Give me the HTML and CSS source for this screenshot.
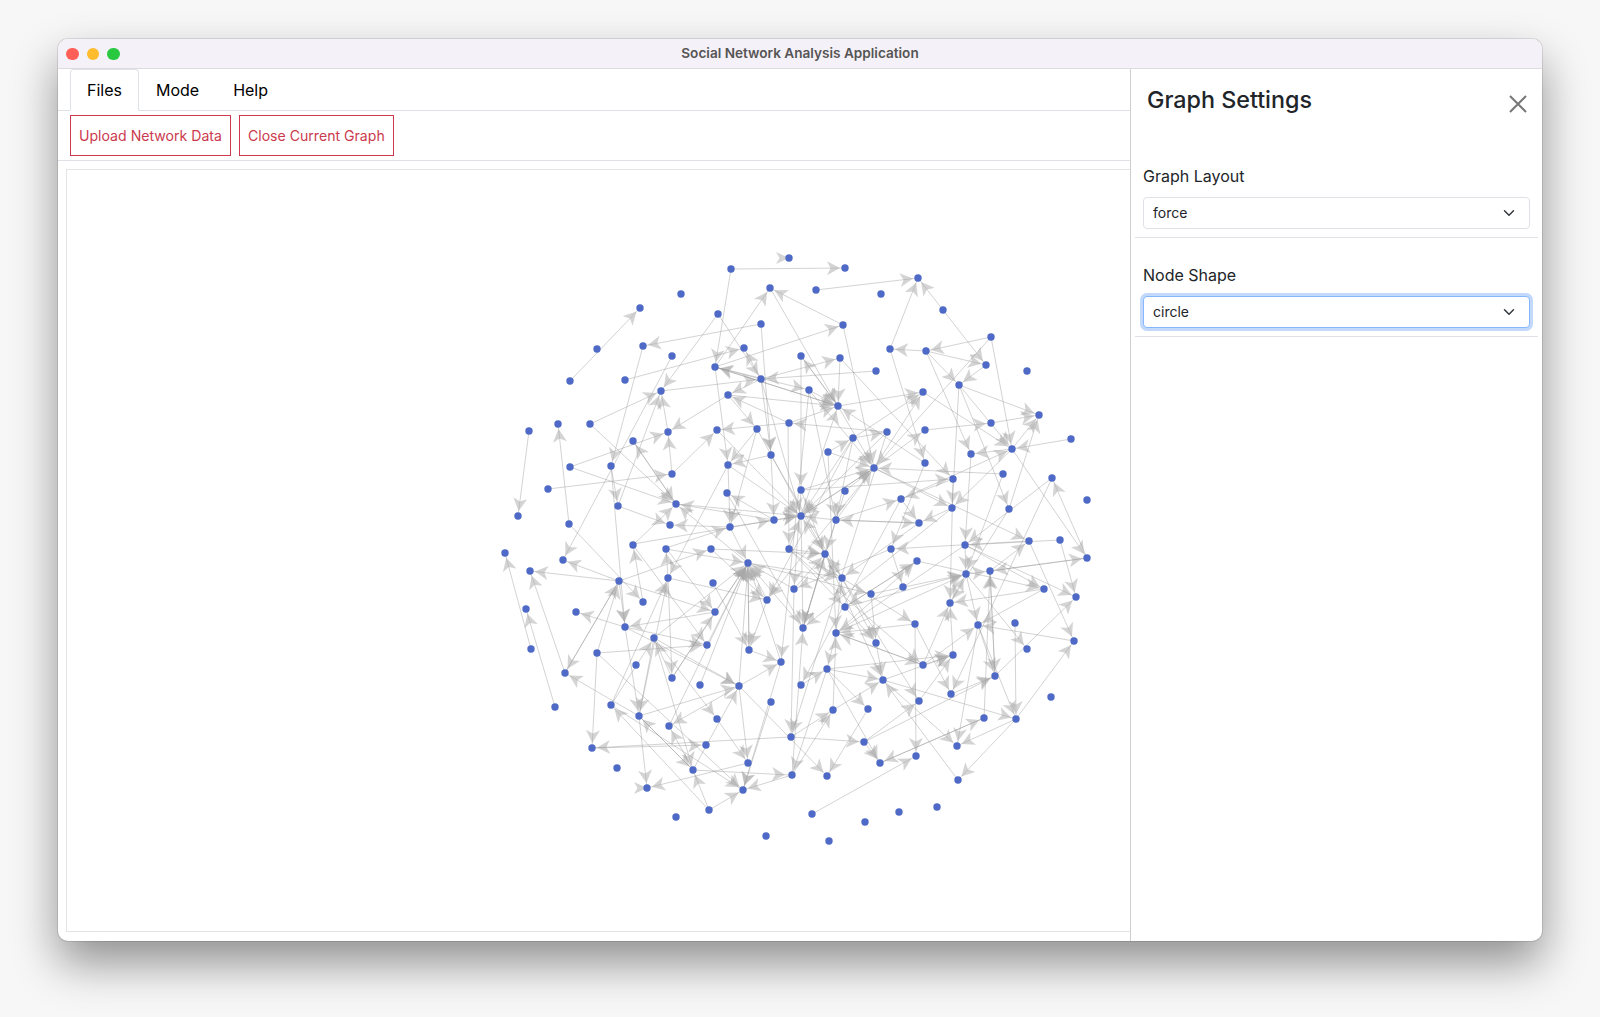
FILE: index.html
```html
<!DOCTYPE html>
<html lang="en">
<head>
<meta charset="utf-8">
<title>Social Network Analysis Application</title>
<link rel="stylesheet" href="styles.css">
</head>
<body>
<div class="window">
  <header class="titlebar">
    <div class="lights"><span class="light red"></span><span class="light yellow"></span><span class="light green"></span></div>
    <div class="title">Social Network Analysis Application</div>
  </header>
  <div class="main">
    <section class="workspace">
      <nav class="tabs">
        <a class="tab active">Files</a>
        <a class="tab">Mode</a>
        <a class="tab">Help</a>
      </nav>
      <div class="toolbar">
        <button class="btn">Upload Network Data</button>
        <button class="btn">Close Current Graph</button>
      </div>
      <div class="canvas">
<svg class="graph" width="1064" height="762" viewBox="67 170 1064 762">
<defs><marker id="a" markerUnits="userSpaceOnUse" markerWidth="13" markerHeight="14" viewBox="0 -7 13 14" refX="18" refY="0" orient="auto"><path class="head" d="M0,-7L13,0L0,7L3.5,0Z"/></marker></defs>
<g class="edges" marker-end="url(#a)">
<line x1="570" y1="381" x2="640" y2="308"/><line x1="731" y1="269" x2="845" y2="268"/><line x1="731" y1="269" x2="715" y2="367"/><line x1="761" y1="324" x2="643" y2="346"/><line x1="718" y1="314" x2="661" y2="391"/><line x1="715" y1="367" x2="770" y2="288"/><line x1="625" y1="380" x2="744" y2="348"/><line x1="643" y1="346" x2="611" y2="466"/><line x1="672" y1="356" x2="563" y2="560"/><line x1="843" y1="325" x2="770" y2="288"/><line x1="770" y1="288" x2="838" y2="406"/><line x1="761" y1="324" x2="771" y2="455"/><line x1="718" y1="314" x2="761" y2="379"/><line x1="715" y1="367" x2="843" y2="325"/><line x1="761" y1="379" x2="744" y2="348"/><line x1="761" y1="379" x2="715" y2="367"/><line x1="838" y1="406" x2="715" y2="367"/><line x1="661" y1="391" x2="761" y2="379"/><line x1="761" y1="379" x2="728" y2="395"/><line x1="789" y1="423" x2="728" y2="395"/><line x1="590" y1="424" x2="661" y2="391"/><line x1="590" y1="424" x2="676" y2="504"/><line x1="728" y1="395" x2="668" y2="432"/><line x1="570" y1="467" x2="668" y2="432"/><line x1="570" y1="467" x2="676" y2="504"/><line x1="672" y1="474" x2="668" y2="432"/><line x1="668" y1="432" x2="661" y2="391"/><line x1="618" y1="506" x2="661" y2="391"/><line x1="676" y1="504" x2="633" y2="441"/><line x1="633" y1="441" x2="676" y2="504"/><line x1="548" y1="489" x2="672" y2="474"/><line x1="672" y1="474" x2="717" y2="430"/><line x1="569" y1="524" x2="558" y2="424"/><line x1="529" y1="431" x2="518" y2="516"/><line x1="618" y1="506" x2="670" y2="525"/><line x1="611" y1="466" x2="618" y2="506"/><line x1="611" y1="466" x2="625" y2="627"/><line x1="569" y1="524" x2="643" y2="602"/><line x1="643" y1="602" x2="633" y2="545"/><line x1="633" y1="544" x2="774" y2="520"/><line x1="666" y1="548" x2="730" y2="527"/><line x1="728" y1="465" x2="668" y2="578"/><line x1="788" y1="423" x2="717" y2="430"/><line x1="757" y1="429" x2="728" y2="465"/><line x1="771" y1="455" x2="728" y2="465"/><line x1="717" y1="430" x2="801" y2="516"/><line x1="774" y1="520" x2="727" y2="493"/><line x1="728" y1="465" x2="730" y2="527"/><line x1="757" y1="429" x2="730" y2="527"/><line x1="771" y1="455" x2="774" y2="520"/><line x1="728" y1="395" x2="757" y2="429"/><line x1="715" y1="367" x2="728" y2="465"/><line x1="761" y1="379" x2="771" y2="455"/><line x1="761" y1="379" x2="801" y2="516"/><line x1="715" y1="367" x2="809" y2="390"/><line x1="715" y1="367" x2="838" y2="406"/><line x1="876" y1="371" x2="761" y2="379"/><line x1="761" y1="379" x2="840" y2="358"/><line x1="801" y1="356" x2="838" y2="406"/><line x1="838" y1="406" x2="801" y2="356"/><line x1="840" y1="358" x2="838" y2="406"/><line x1="840" y1="358" x2="953" y2="479"/><line x1="843" y1="325" x2="874" y2="468"/><line x1="816" y1="290" x2="918" y2="278"/><line x1="890" y1="349" x2="918" y2="278"/><line x1="943" y1="310" x2="918" y2="278"/><line x1="943" y1="310" x2="986" y2="365"/><line x1="926" y1="351" x2="986" y2="365"/><line x1="926" y1="351" x2="890" y2="349"/><line x1="991" y1="337" x2="926" y2="351"/><line x1="991" y1="337" x2="1012" y2="449"/><line x1="991" y1="337" x2="874" y2="468"/><line x1="890" y1="349" x2="925" y2="463"/><line x1="986" y1="365" x2="959" y2="385"/><line x1="926" y1="351" x2="971" y2="454"/><line x1="926" y1="351" x2="959" y2="385"/><line x1="959" y1="385" x2="1039" y2="415"/><line x1="838" y1="406" x2="923" y2="392"/><line x1="923" y1="392" x2="1012" y2="449"/><line x1="959" y1="385" x2="1012" y2="449"/><line x1="959" y1="385" x2="1009" y2="509"/><line x1="959" y1="385" x2="952" y2="508"/><line x1="1012" y1="449" x2="1039" y2="415"/><line x1="1009" y1="509" x2="1039" y2="415"/><line x1="991" y1="423" x2="1039" y2="415"/><line x1="925" y1="430" x2="991" y2="423"/><line x1="1071" y1="439" x2="1012" y2="449"/><line x1="1012" y1="449" x2="971" y2="454"/><line x1="901" y1="499" x2="1012" y2="449"/><line x1="1012" y1="449" x2="1087" y2="558"/><line x1="1029" y1="541" x2="1074" y2="641"/><line x1="1087" y1="558" x2="1052" y2="478"/><line x1="1060" y1="540" x2="1076" y2="597"/><line x1="1052" y1="478" x2="965" y2="545"/><line x1="1012" y1="449" x2="952" y2="508"/><line x1="971" y1="454" x2="965" y2="545"/><line x1="1003" y1="474" x2="874" y2="468"/><line x1="874" y1="468" x2="1029" y2="541"/><line x1="874" y1="468" x2="952" y2="508"/><line x1="953" y1="479" x2="901" y2="499"/><line x1="919" y1="523" x2="836" y2="520"/><line x1="836" y1="520" x2="919" y2="523"/><line x1="952" y1="508" x2="919" y2="523"/><line x1="901" y1="499" x2="919" y2="523"/><line x1="853" y1="438" x2="887" y2="432"/><line x1="887" y1="432" x2="789" y2="423"/><line x1="853" y1="438" x2="923" y2="392"/><line x1="828" y1="452" x2="853" y2="438"/><line x1="874" y1="468" x2="925" y2="430"/><line x1="874" y1="468" x2="923" y2="392"/><line x1="801" y1="490" x2="874" y2="468"/><line x1="801" y1="516" x2="874" y2="468"/><line x1="836" y1="520" x2="874" y2="468"/><line x1="845" y1="491" x2="874" y2="468"/><line x1="838" y1="406" x2="874" y2="468"/><line x1="809" y1="390" x2="874" y2="468"/><line x1="828" y1="452" x2="874" y2="468"/><line x1="789" y1="423" x2="838" y2="406"/><line x1="728" y1="395" x2="838" y2="406"/><line x1="809" y1="390" x2="838" y2="406"/><line x1="853" y1="438" x2="836" y2="520"/><line x1="809" y1="390" x2="836" y2="520"/><line x1="801" y1="356" x2="801" y2="490"/><line x1="887" y1="432" x2="801" y2="516"/><line x1="801" y1="490" x2="953" y2="479"/><line x1="836" y1="520" x2="901" y2="499"/><line x1="801" y1="516" x2="838" y2="406"/><line x1="925" y1="463" x2="838" y2="406"/><line x1="531" y1="649" x2="505" y2="553"/><line x1="555" y1="707" x2="526" y2="609"/><line x1="565" y1="673" x2="530" y2="571"/><line x1="619" y1="581" x2="530" y2="571"/><line x1="625" y1="627" x2="576" y2="612"/><line x1="619" y1="581" x2="563" y2="560"/><line x1="565" y1="673" x2="619" y2="581"/><line x1="619" y1="581" x2="565" y2="673"/><line x1="597" y1="653" x2="619" y2="581"/><line x1="597" y1="653" x2="592" y2="748"/><line x1="789" y1="737" x2="592" y2="748"/><line x1="592" y1="748" x2="706" y2="745"/><line x1="597" y1="653" x2="707" y2="645"/><line x1="625" y1="627" x2="707" y2="645"/><line x1="625" y1="627" x2="739" y2="686"/><line x1="654" y1="638" x2="739" y2="686"/><line x1="639" y1="716" x2="565" y2="673"/><line x1="611" y1="705" x2="654" y2="638"/><line x1="709" y1="810" x2="611" y2="705"/><line x1="709" y1="810" x2="693" y2="770"/><line x1="709" y1="810" x2="743" y2="790"/><line x1="693" y1="770" x2="639" y2="716"/><line x1="639" y1="716" x2="693" y2="770"/><line x1="639" y1="716" x2="739" y2="686"/><line x1="625" y1="627" x2="639" y2="716"/><line x1="619" y1="581" x2="625" y2="627"/><line x1="654" y1="638" x2="639" y2="716"/><line x1="654" y1="638" x2="693" y2="770"/><line x1="739" y1="686" x2="669" y2="726"/><line x1="693" y1="770" x2="669" y2="726"/><line x1="668" y1="578" x2="672" y2="678"/><line x1="672" y1="678" x2="654" y2="638"/><line x1="715" y1="612" x2="625" y2="627"/><line x1="672" y1="678" x2="715" y2="612"/><line x1="654" y1="638" x2="717" y2="719"/><line x1="717" y1="719" x2="748" y2="763"/><line x1="611" y1="705" x2="743" y2="790"/><line x1="748" y1="763" x2="647" y2="788"/><line x1="597" y1="653" x2="743" y2="790"/><line x1="639" y1="716" x2="647" y2="788"/><line x1="693" y1="770" x2="790" y2="775"/><line x1="739" y1="686" x2="781" y2="662"/><line x1="739" y1="686" x2="748" y2="763"/><line x1="693" y1="770" x2="739" y2="686"/><line x1="739" y1="686" x2="827" y2="776"/><line x1="792" y1="775" x2="743" y2="790"/><line x1="771" y1="702" x2="743" y2="790"/><line x1="781" y1="662" x2="743" y2="790"/><line x1="700" y1="685" x2="748" y2="563"/><line x1="749" y1="650" x2="748" y2="563"/><line x1="748" y1="563" x2="749" y2="650"/><line x1="669" y1="726" x2="748" y2="563"/><line x1="715" y1="612" x2="748" y2="563"/><line x1="672" y1="678" x2="748" y2="563"/><line x1="739" y1="686" x2="748" y2="563"/><line x1="767" y1="600" x2="748" y2="563"/><line x1="794" y1="589" x2="748" y2="563"/><line x1="781" y1="662" x2="748" y2="563"/><line x1="803" y1="628" x2="748" y2="563"/><line x1="707" y1="645" x2="748" y2="563"/><line x1="654" y1="638" x2="748" y2="563"/><line x1="668" y1="578" x2="767" y2="600"/><line x1="713" y1="583" x2="749" y2="650"/><line x1="767" y1="600" x2="749" y2="650"/><line x1="749" y1="650" x2="781" y2="662"/><line x1="668" y1="578" x2="666" y2="548"/><line x1="633" y1="545" x2="707" y2="645"/><line x1="611" y1="705" x2="668" y2="578"/><line x1="639" y1="716" x2="668" y2="578"/><line x1="619" y1="581" x2="715" y2="612"/><line x1="619" y1="581" x2="711" y2="549"/><line x1="666" y1="548" x2="715" y2="612"/><line x1="711" y1="549" x2="767" y2="600"/><line x1="812" y1="814" x2="916" y2="756"/><line x1="1016" y1="719" x2="958" y2="780"/><line x1="1016" y1="719" x2="1074" y2="641"/><line x1="958" y1="780" x2="883" y2="680"/><line x1="1016" y1="719" x2="957" y2="746"/><line x1="984" y1="718" x2="880" y2="763"/><line x1="880" y1="763" x2="984" y2="718"/><line x1="978" y1="625" x2="957" y2="746"/><line x1="883" y1="680" x2="957" y2="746"/><line x1="883" y1="680" x2="1016" y2="719"/><line x1="978" y1="625" x2="1016" y2="719"/><line x1="1015" y1="623" x2="1016" y2="719"/><line x1="966" y1="574" x2="1027" y2="649"/><line x1="966" y1="574" x2="978" y2="625"/><line x1="990" y1="571" x2="995" y2="676"/><line x1="978" y1="625" x2="995" y2="676"/><line x1="995" y1="676" x2="990" y2="571"/><line x1="951" y1="694" x2="995" y2="676"/><line x1="984" y1="718" x2="990" y2="571"/><line x1="1074" y1="641" x2="978" y2="625"/><line x1="995" y1="676" x2="1076" y2="597"/><line x1="1044" y1="589" x2="950" y2="603"/><line x1="1087" y1="558" x2="990" y2="571"/><line x1="990" y1="571" x2="1087" y2="558"/><line x1="965" y1="545" x2="1044" y2="589"/><line x1="965" y1="545" x2="1076" y2="597"/><line x1="990" y1="571" x2="1029" y2="541"/><line x1="966" y1="574" x2="990" y2="571"/><line x1="965" y1="545" x2="966" y2="574"/><line x1="950" y1="603" x2="966" y2="574"/><line x1="953" y1="655" x2="950" y2="603"/><line x1="923" y1="665" x2="950" y2="603"/><line x1="923" y1="665" x2="978" y2="625"/><line x1="923" y1="665" x2="953" y2="655"/><line x1="883" y1="680" x2="953" y2="655"/><line x1="919" y1="701" x2="953" y2="655"/><line x1="827" y1="669" x2="953" y2="655"/><line x1="836" y1="633" x2="923" y2="665"/><line x1="923" y1="665" x2="836" y2="633"/><line x1="915" y1="624" x2="916" y2="756"/><line x1="915" y1="624" x2="951" y2="694"/><line x1="871" y1="594" x2="876" y2="643"/><line x1="845" y1="607" x2="876" y2="643"/><line x1="876" y1="643" x2="883" y2="680"/><line x1="842" y1="578" x2="919" y2="701"/><line x1="792" y1="737" x2="864" y2="742"/><line x1="864" y1="742" x2="995" y2="676"/><line x1="864" y1="742" x2="880" y2="763"/><line x1="827" y1="669" x2="880" y2="763"/><line x1="868" y1="709" x2="827" y2="776"/><line x1="827" y1="669" x2="868" y2="709"/><line x1="827" y1="669" x2="883" y2="680"/><line x1="827" y1="669" x2="792" y2="775"/><line x1="792" y1="775" x2="833" y2="710"/><line x1="791" y1="737" x2="833" y2="710"/><line x1="833" y1="710" x2="883" y2="680"/><line x1="833" y1="710" x2="836" y2="633"/><line x1="864" y1="742" x2="919" y2="701"/><line x1="801" y1="685" x2="827" y2="669"/><line x1="794" y1="589" x2="791" y2="737"/><line x1="792" y1="775" x2="803" y2="628"/><line x1="825" y1="554" x2="803" y2="628"/><line x1="801" y1="516" x2="803" y2="628"/><line x1="836" y1="633" x2="827" y2="669"/><line x1="836" y1="633" x2="842" y2="578"/><line x1="842" y1="578" x2="825" y2="554"/><line x1="794" y1="589" x2="825" y2="554"/><line x1="803" y1="628" x2="825" y2="554"/><line x1="789" y1="549" x2="825" y2="554"/><line x1="801" y1="490" x2="825" y2="554"/><line x1="836" y1="520" x2="825" y2="554"/><line x1="836" y1="633" x2="917" y2="561"/><line x1="845" y1="607" x2="917" y2="561"/><line x1="891" y1="549" x2="903" y2="587"/><line x1="842" y1="578" x2="915" y2="624"/><line x1="915" y1="624" x2="836" y2="633"/><line x1="871" y1="594" x2="966" y2="574"/><line x1="845" y1="607" x2="966" y2="574"/><line x1="836" y1="633" x2="966" y2="574"/><line x1="676" y1="504" x2="801" y2="516"/><line x1="730" y1="527" x2="801" y2="516"/><line x1="774" y1="520" x2="801" y2="516"/><line x1="789" y1="548" x2="801" y2="516"/><line x1="728" y1="465" x2="801" y2="516"/><line x1="853" y1="438" x2="801" y2="516"/><line x1="836" y1="520" x2="801" y2="516"/><line x1="825" y1="554" x2="801" y2="516"/><line x1="874" y1="468" x2="801" y2="516"/><line x1="774" y1="520" x2="676" y2="504"/><line x1="748" y1="563" x2="676" y2="504"/><line x1="633" y1="545" x2="676" y2="504"/><line x1="730" y1="527" x2="670" y2="525"/><line x1="711" y1="549" x2="825" y2="554"/><line x1="788" y1="548" x2="842" y2="578"/><line x1="748" y1="563" x2="842" y2="578"/><line x1="666" y1="549" x2="748" y2="563"/><line x1="730" y1="527" x2="748" y2="563"/><line x1="788" y1="423" x2="789" y2="548"/><line x1="757" y1="429" x2="825" y2="554"/><line x1="771" y1="455" x2="842" y2="578"/><line x1="727" y1="493" x2="803" y2="628"/><line x1="801" y1="490" x2="794" y2="589"/><line x1="845" y1="491" x2="803" y2="628"/><line x1="887" y1="432" x2="791" y2="737"/><line x1="828" y1="452" x2="836" y2="633"/><line x1="853" y1="438" x2="767" y2="600"/><line x1="809" y1="390" x2="781" y2="662"/><line x1="874" y1="468" x2="767" y2="600"/><line x1="901" y1="499" x2="801" y2="685"/><line x1="789" y1="549" x2="845" y2="607"/><line x1="748" y1="563" x2="871" y2="594"/><line x1="789" y1="549" x2="923" y2="665"/><line x1="825" y1="554" x2="883" y2="680"/><line x1="842" y1="578" x2="876" y2="643"/><line x1="891" y1="549" x2="794" y2="589"/><line x1="917" y1="561" x2="845" y2="607"/><line x1="965" y1="545" x2="836" y2="633"/><line x1="952" y1="508" x2="803" y2="628"/><line x1="919" y1="523" x2="842" y2="578"/><line x1="1009" y1="509" x2="950" y2="603"/><line x1="1003" y1="474" x2="966" y2="574"/><line x1="925" y1="463" x2="891" y2="549"/><line x1="953" y1="479" x2="950" y2="603"/><line x1="1029" y1="541" x2="891" y2="549"/><line x1="1052" y1="478" x2="951" y2="694"/><line x1="1044" y1="589" x2="978" y2="625"/><line x1="1060" y1="540" x2="965" y2="545"/><line x1="917" y1="561" x2="1044" y2="589"/>
</g>
<path class="head" d="M776,252L789,258L776,264L779.5,258Z"/><path class="head" d="M634,782L647,788L634,794L637.5,788Z"/>
<g class="nodes">
<circle cx="731" cy="269" r="3.7"/><circle cx="789" cy="258" r="3.7"/><circle cx="770" cy="288" r="3.7"/><circle cx="681" cy="294" r="3.7"/><circle cx="640" cy="308" r="3.7"/><circle cx="718" cy="314" r="3.7"/><circle cx="761" cy="324" r="3.7"/><circle cx="597" cy="349" r="3.7"/><circle cx="643" cy="346" r="3.7"/><circle cx="744" cy="348" r="3.7"/><circle cx="672" cy="356" r="3.7"/><circle cx="715" cy="367" r="3.7"/><circle cx="570" cy="381" r="3.7"/><circle cx="625" cy="380" r="3.7"/><circle cx="761" cy="379" r="3.7"/><circle cx="661" cy="391" r="3.7"/><circle cx="728" cy="395" r="3.7"/><circle cx="529" cy="431" r="3.7"/><circle cx="558" cy="424" r="3.7"/><circle cx="590" cy="424" r="3.7"/><circle cx="668" cy="432" r="3.7"/><circle cx="717" cy="430" r="3.7"/><circle cx="757" cy="429" r="3.7"/><circle cx="633" cy="441" r="3.7"/><circle cx="771" cy="455" r="3.7"/><circle cx="570" cy="467" r="3.7"/><circle cx="611" cy="466" r="3.7"/><circle cx="728" cy="465" r="3.7"/><circle cx="672" cy="474" r="3.7"/><circle cx="548" cy="489" r="3.7"/><circle cx="727" cy="493" r="3.7"/><circle cx="676" cy="504" r="3.7"/><circle cx="518" cy="516" r="3.7"/><circle cx="618" cy="506" r="3.7"/><circle cx="569" cy="524" r="3.7"/><circle cx="670" cy="525" r="3.7"/><circle cx="730" cy="527" r="3.7"/><circle cx="774" cy="520" r="3.7"/><circle cx="633" cy="545" r="3.7"/><circle cx="666" cy="549" r="3.7"/><circle cx="711" cy="549" r="3.7"/><circle cx="845" cy="268" r="3.7"/><circle cx="918" cy="278" r="3.7"/><circle cx="816" cy="290" r="3.7"/><circle cx="881" cy="294" r="3.7"/><circle cx="943" cy="310" r="3.7"/><circle cx="843" cy="325" r="3.7"/><circle cx="991" cy="337" r="3.7"/><circle cx="890" cy="349" r="3.7"/><circle cx="926" cy="351" r="3.7"/><circle cx="801" cy="356" r="3.7"/><circle cx="840" cy="358" r="3.7"/><circle cx="986" cy="365" r="3.7"/><circle cx="876" cy="371" r="3.7"/><circle cx="1027" cy="371" r="3.7"/><circle cx="959" cy="385" r="3.7"/><circle cx="923" cy="392" r="3.7"/><circle cx="809" cy="390" r="3.7"/><circle cx="838" cy="406" r="3.7"/><circle cx="1039" cy="415" r="3.7"/><circle cx="789" cy="423" r="3.7"/><circle cx="991" cy="423" r="3.7"/><circle cx="887" cy="432" r="3.7"/><circle cx="925" cy="430" r="3.7"/><circle cx="853" cy="438" r="3.7"/><circle cx="1071" cy="439" r="3.7"/><circle cx="1012" cy="449" r="3.7"/><circle cx="828" cy="452" r="3.7"/><circle cx="971" cy="454" r="3.7"/><circle cx="925" cy="463" r="3.7"/><circle cx="874" cy="468" r="3.7"/><circle cx="1003" cy="474" r="3.7"/><circle cx="953" cy="479" r="3.7"/><circle cx="1052" cy="478" r="3.7"/><circle cx="801" cy="490" r="3.7"/><circle cx="845" cy="491" r="3.7"/><circle cx="901" cy="499" r="3.7"/><circle cx="1087" cy="500" r="3.7"/><circle cx="952" cy="508" r="3.7"/><circle cx="1009" cy="509" r="3.7"/><circle cx="801" cy="516" r="3.7"/><circle cx="836" cy="520" r="3.7"/><circle cx="919" cy="523" r="3.7"/><circle cx="789" cy="549" r="3.7"/><circle cx="891" cy="549" r="3.7"/><circle cx="965" cy="545" r="3.7"/><circle cx="1029" cy="541" r="3.7"/><circle cx="1060" cy="540" r="3.7"/><circle cx="1087" cy="558" r="3.7"/><circle cx="505" cy="553" r="3.7"/><circle cx="530" cy="571" r="3.7"/><circle cx="563" cy="560" r="3.7"/><circle cx="619" cy="581" r="3.7"/><circle cx="748" cy="563" r="3.7"/><circle cx="668" cy="578" r="3.7"/><circle cx="713" cy="583" r="3.7"/><circle cx="643" cy="602" r="3.7"/><circle cx="767" cy="600" r="3.7"/><circle cx="526" cy="609" r="3.7"/><circle cx="576" cy="612" r="3.7"/><circle cx="715" cy="612" r="3.7"/><circle cx="625" cy="627" r="3.7"/><circle cx="654" cy="638" r="3.7"/><circle cx="531" cy="649" r="3.7"/><circle cx="707" cy="645" r="3.7"/><circle cx="749" cy="650" r="3.7"/><circle cx="597" cy="653" r="3.7"/><circle cx="781" cy="662" r="3.7"/><circle cx="636" cy="665" r="3.7"/><circle cx="565" cy="673" r="3.7"/><circle cx="672" cy="678" r="3.7"/><circle cx="700" cy="685" r="3.7"/><circle cx="739" cy="686" r="3.7"/><circle cx="611" cy="705" r="3.7"/><circle cx="771" cy="702" r="3.7"/><circle cx="639" cy="716" r="3.7"/><circle cx="555" cy="707" r="3.7"/><circle cx="669" cy="726" r="3.7"/><circle cx="717" cy="719" r="3.7"/><circle cx="592" cy="748" r="3.7"/><circle cx="706" cy="745" r="3.7"/><circle cx="617" cy="768" r="3.7"/><circle cx="748" cy="763" r="3.7"/><circle cx="693" cy="770" r="3.7"/><circle cx="647" cy="788" r="3.7"/><circle cx="743" cy="790" r="3.7"/><circle cx="709" cy="810" r="3.7"/><circle cx="676" cy="817" r="3.7"/><circle cx="766" cy="836" r="3.7"/><circle cx="825" cy="554" r="3.7"/><circle cx="917" cy="561" r="3.7"/><circle cx="990" cy="571" r="3.7"/><circle cx="966" cy="574" r="3.7"/><circle cx="842" cy="578" r="3.7"/><circle cx="794" cy="589" r="3.7"/><circle cx="903" cy="587" r="3.7"/><circle cx="871" cy="594" r="3.7"/><circle cx="1044" cy="589" r="3.7"/><circle cx="1076" cy="597" r="3.7"/><circle cx="950" cy="603" r="3.7"/><circle cx="845" cy="607" r="3.7"/><circle cx="915" cy="624" r="3.7"/><circle cx="978" cy="625" r="3.7"/><circle cx="1015" cy="623" r="3.7"/><circle cx="803" cy="628" r="3.7"/><circle cx="836" cy="633" r="3.7"/><circle cx="876" cy="643" r="3.7"/><circle cx="1074" cy="641" r="3.7"/><circle cx="1027" cy="649" r="3.7"/><circle cx="953" cy="655" r="3.7"/><circle cx="827" cy="669" r="3.7"/><circle cx="923" cy="665" r="3.7"/><circle cx="995" cy="676" r="3.7"/><circle cx="883" cy="680" r="3.7"/><circle cx="801" cy="685" r="3.7"/><circle cx="951" cy="694" r="3.7"/><circle cx="919" cy="701" r="3.7"/><circle cx="1051" cy="697" r="3.7"/><circle cx="833" cy="710" r="3.7"/><circle cx="868" cy="709" r="3.7"/><circle cx="1016" cy="719" r="3.7"/><circle cx="984" cy="718" r="3.7"/><circle cx="791" cy="737" r="3.7"/><circle cx="864" cy="742" r="3.7"/><circle cx="957" cy="746" r="3.7"/><circle cx="916" cy="756" r="3.7"/><circle cx="792" cy="775" r="3.7"/><circle cx="827" cy="776" r="3.7"/><circle cx="880" cy="763" r="3.7"/><circle cx="958" cy="780" r="3.7"/><circle cx="812" cy="814" r="3.7"/><circle cx="865" cy="822" r="3.7"/><circle cx="899" cy="812" r="3.7"/><circle cx="937" cy="807" r="3.7"/><circle cx="829" cy="841" r="3.7"/>
</g>
</svg>
      </div>
    </section>
    <aside class="sidebar">
      <div class="side-head">
        <h2 class="side-title">Graph Settings</h2>
        <svg class="close" width="18" height="18" viewBox="0 0 18 18"><path d="M1 1L17 17M17 1L1 17"/></svg>
      </div>
      <div class="field">
        <label class="field-label">Graph Layout</label>
        <div class="select-wrap">
          <select class="select"><option>force</option></select>
          <svg class="chevron" width="12" height="12" viewBox="0 0 16 16"><path d="M2 5l6 6 6-6"/></svg>
        </div>
      </div>
      <div class="field">
        <label class="field-label">Node Shape</label>
        <div class="select-wrap">
          <select class="select focused"><option>circle</option></select>
          <svg class="chevron" width="12" height="12" viewBox="0 0 16 16"><path d="M2 5l6 6 6-6"/></svg>
        </div>
      </div>
    </aside>
  </div>
</div>
</body>
</html>
```
FILE: styles.css
```css
* { box-sizing: border-box; }
html, body { margin: 0; height: 100%; }
body {
  background: #f7f7f7;
  padding: 39px 0 0 58px;
  font-family: Inter, "Liberation Sans", sans-serif;
  overflow: hidden;
}
.window {
  width: 1484px;
  height: 902px;
  background: #fff;
  border-radius: 10px;
  overflow: hidden;
  display: flex;
  flex-direction: column;
  box-shadow: 0 0 0 1px rgba(0,0,0,.1), 0 22px 46px 0 rgba(0,0,0,.42);
}
.titlebar {
  height: 30px;
  flex: none;
  background: #f5f1f8;
  border-bottom: 1px solid #dedbe0;
  padding-bottom: 2px;
  display: flex;
  align-items: center;
  justify-content: center;
  position: relative;
}
.lights { position: absolute; left: 8px; top: 8.5px; display: flex; gap: 8px; }
.light { width: 12.5px; height: 12.5px; border-radius: 50%; }
.red { background: #ff5f57; }
.yellow { background: #febc2e; }
.green { background: #28c840; }
.title { font-size: 13.6px; font-weight: 600; color: #555; }
.main { flex: 1; display: flex; min-height: 0; }
.workspace { width: 1072px; flex: none; display: flex; flex-direction: column; }
.tabs {
  height: 42px;
  flex: none;
  display: flex;
  padding-left: 12px;
  border-bottom: 1px solid #dee2e6;
}
.tab {
  height: 42px;
  padding: 0 16px;
  display: flex;
  align-items: center;
  font-size: 16px;
  color: #000;
  border: 1px solid transparent;
  border-radius: 4px 4px 0 0;
}
.tab.active { border-color: #dee2e6 #dee2e6 #fff; background: #fff; }
.toolbar {
  height: 50px;
  flex: none;
  display: flex;
  gap: 8px;
  padding: 4px 0 0 12px;
  border-bottom: 1px solid #dee2e6;
}
.btn {
  height: 41px;
  padding: 0 8px;
  background: #fff;
  border: 1px solid #d0384d;
  color: #cb3a4e;
  font: 14.1px Inter, "Liberation Sans", sans-serif;
  border-radius: 0;
}
.canvas {
  flex: 1;
  margin: 8px 0 9px 8px;
  border: 1px solid #e4e4e4;
  border-right: 0;
  overflow: hidden;
}
.graph { display: block; }
.edges line { stroke: rgba(150,150,150,.42); stroke-width: 1; }
.head { fill: rgba(170,170,170,.5); }
.nodes circle { fill: #4e69c6; }
.sidebar {
  flex: 1;
  border-left: 1px solid #cfcfcf;
  padding: 0 4px;
}
.side-head {
  height: 70px;
  display: flex;
  justify-content: space-between;
  padding: 16px 11px 0 12px;
}
.side-title {
  margin: 0;
  font-size: 23.3px;
  font-weight: 500;
  line-height: 30px;
  color: #212529;
}
.close { margin-top: 10px; }
.close path { stroke: #777; stroke-width: 2; fill: none; }
.field {
  height: 99px;
  padding: 25px 8px 0;
  border-bottom: 1px solid #dee2e6;
}
.field-label {
  display: block;
  font-size: 16px;
  line-height: 24px;
  color: #212529;
  margin-bottom: 9px;
}
.select-wrap { position: relative; }
.select {
  display: block;
  width: 100%;
  height: 32px;
  appearance: none;
  background: #fff;
  border: 1px solid #dee2e6;
  border-radius: 4px;
  padding: 0 8px 2px 9px;
  font: 14px Inter, "Liberation Sans", sans-serif;
  color: #212529;
  outline: 0;
}
.select.focused {
  border-color: #86b7fe;
  box-shadow: 0 0 0 3px #c2d9fc;
}
.chevron { position: absolute; right: 15px; top: 10px; pointer-events: none; }
.chevron path { stroke: #343a40; stroke-width: 2; fill: none; stroke-linecap: round; stroke-linejoin: round; }
```
